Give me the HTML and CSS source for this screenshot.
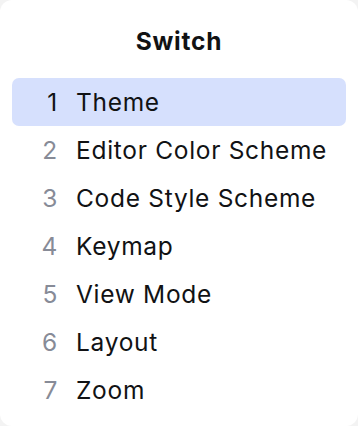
FILE: index.html
```html
<!DOCTYPE html>
<html>
<head>
<meta charset="utf-8">
<link rel="stylesheet" href="styles.css">
</head>
<body>
<div class="card">
  <div class="title">Switch</div>
  <ul class="list">
    <li class="row selected"><span class="num">1</span><span class="label">Theme</span></li>
    <li class="row"><span class="num">2</span><span class="label">Editor Color Scheme</span></li>
    <li class="row"><span class="num">3</span><span class="label">Code Style Scheme</span></li>
    <li class="row"><span class="num">4</span><span class="label">Keymap</span></li>
    <li class="row"><span class="num">5</span><span class="label">View Mode</span></li>
    <li class="row"><span class="num">6</span><span class="label">Layout</span></li>
    <li class="row"><span class="num">7</span><span class="label">Zoom</span></li>
  </ul>
</div>
</body>
</html>
```
FILE: styles.css
```css
html, body {
  margin: 0;
  padding: 0;
  background: #f3f3f3;
}
body {
  font-family: Inter, "Noto Sans", sans-serif;
  color: #111214;
}
.card {
  width: 358px;
  height: 426px;
  box-sizing: border-box;
  background: #ffffff;
  border-radius: 12px;
  padding-top: 25px;
}
.title {
  font-size: 24.5px;
  font-weight: 700;
  line-height: 32px;
  letter-spacing: 0.8px;
  text-align: center;
}
.list {
  list-style: none;
  margin: 21px 0 0;
  padding: 0 12px;
}
.row {
  display: flex;
  align-items: center;
  height: 48px;
  font-size: 24.5px;
  line-height: 48px;
  letter-spacing: 0.7px;
  padding-left: 22px;
  gap: 18px;
  border-radius: 7px;
}
.row.selected {
  background: #d6e0fd;
}
.num {
  width: 24px;
  text-align: right;
  color: #878b97;
}
.selected .num {
  color: #111214;
}
```
